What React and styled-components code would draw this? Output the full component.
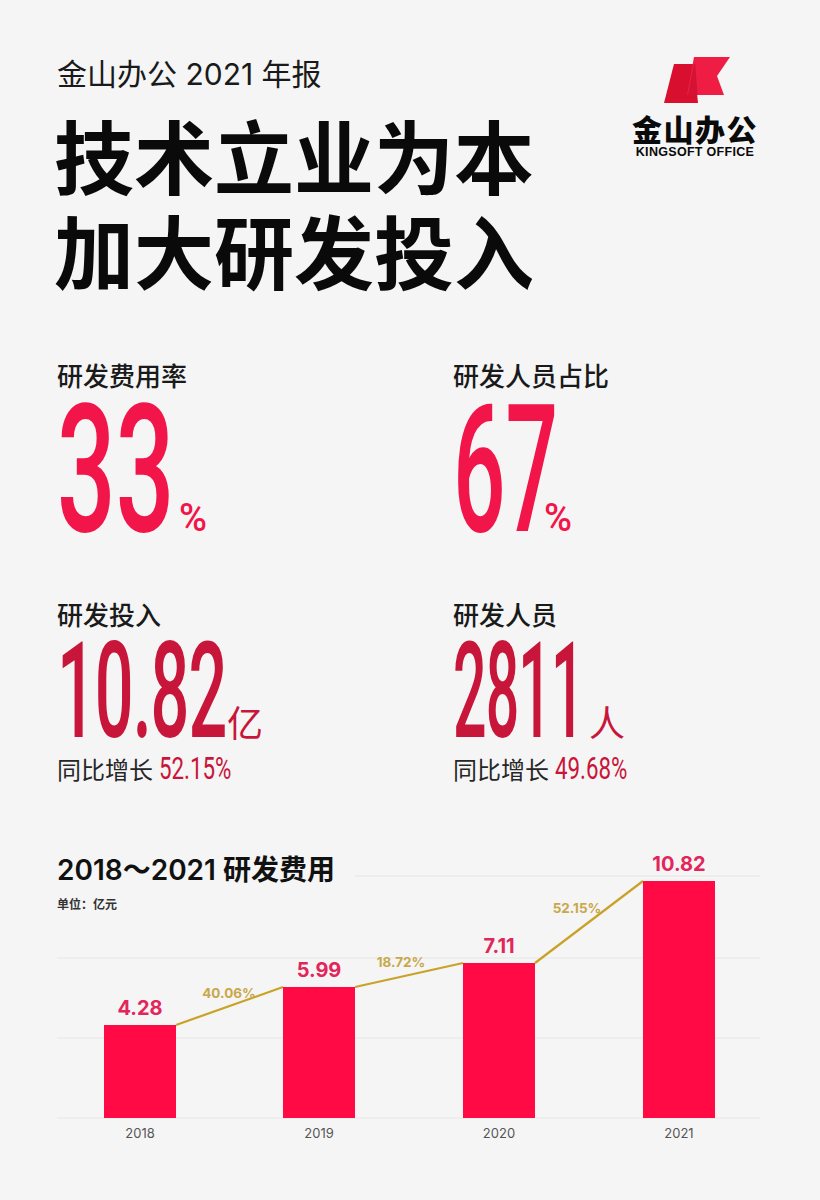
import React from "react";
import styled, { createGlobalStyle } from "styled-components";

const Global = createGlobalStyle`
  html, body {
    margin: 0;
    padding: 0;
    background: #f5f5f5;
  }
  body {
    font-family: "Noto Sans CJK SC", "Noto Sans", sans-serif;
    color: #111;
  }
`;

const Page = styled.div`
  width: 820px;
  min-height: 1200px;
  box-sizing: border-box;
  padding: 57px 60px 0 57px;
  background: #f5f5f5;
`;

const Header = styled.header`
  display: flex;
  justify-content: space-between;
  align-items: flex-start;
`;

const Kicker = styled.div`
  font-size: 30px;
  line-height: 35px;
  font-family: "Inter", "Noto Sans CJK SC", sans-serif;
  color: #1a1a1a;
`;

const Title = styled.h1`
  margin: 14px 0 0 -3px;
  font-size: 80px;
  line-height: 95px;
  font-weight: 700;
  color: #0a0a0a;
`;

const Logo = styled.div`
  display: flex;
  flex-direction: column;
  align-items: center;
  width: 130px;
`;

const LogoCn = styled.div`
  margin-top: 6px;
  font-size: 30px;
  line-height: 30px;
  font-weight: 900;
  letter-spacing: 1.5px;
  color: #0a0a0a;
`;

const LogoEn = styled.div`
  margin-top: 2px;
  font-family: "Liberation Sans", Arial, sans-serif;
  font-size: 12.5px;
  font-weight: 700;
  letter-spacing: 0.3px;
  color: #0a0a0a;
`;

const Stats = styled.section`
  display: grid;
  grid-template-columns: 396px 1fr;
  margin-top: 64px;
  row-gap: 64px;
`;

const Stat = styled.div`
  display: flex;
  flex-direction: column;
`;

const Label = styled.div`
  font-size: 26px;
  line-height: 30px;
  font-weight: 500;
  color: #1a1a1a;
`;

const Figure = styled.div`
  display: flex;
  align-items: baseline;
  margin-top: ${(p) => p.$gap}px;
  line-height: ${(p) => p.$lh}px;
  height: ${(p) => p.$lh}px;
  color: ${(p) => p.$color};
`;

const NumBox = styled.span`
  display: inline-block;
  width: ${(p) => p.$w}px;
  white-space: nowrap;
`;

const Num = styled.span`
  display: inline-block;
  font-family: "Roboto", sans-serif;
  font-weight: 500;
  font-size: ${(p) => p.$size}px;
  letter-spacing: ${(p) => p.$ls || 0}px;
  transform: scaleX(${(p) => p.$sx});
  transform-origin: left bottom;
`;

const Unit = styled.span`
  font-family: ${(p) => (p.$cjk ? '"Noto Sans CJK SC", sans-serif' : '"Roboto", sans-serif')};
  font-size: ${(p) => p.$size}px;
  font-weight: ${(p) => (p.$cjk ? 400 : 500)};
  line-height: 1;
`;

const Growth = styled.div`
  display: flex;
  align-items: baseline;
  margin-top: 12px;
  font-size: 24px;
  line-height: 30px;
  color: #262626;
`;

const GrowthNum = styled.span`
  display: inline-block;
  margin-left: 6px;
  font-family: "Roboto", sans-serif;
  font-size: 31px;
  color: #c8163a;
  transform: scaleX(0.72);
  transform-origin: left bottom;
`;

const ChartSection = styled.section`
  position: relative;
  margin-top: 66px;
  width: 703px;
  height: 300px;
  padding-top: 3px;
  box-sizing: border-box;
`;

const ChartTitle = styled.h2`
  position: relative;
  z-index: 1;
  margin: 0;
  font-family: "Inter", "Noto Sans CJK SC", sans-serif;
  font-size: 28px;
  line-height: 34px;
  font-weight: 600;
  color: #111;
`;

const ChartUnit = styled.div`
  position: relative;
  z-index: 1;
  margin-top: 10px;
  font-size: 12px;
  line-height: 14px;
  font-weight: 700;
  color: #333;
`;

const Canvas = styled.svg`
  position: absolute;
  left: 0;
  top: 0;
`;

const bars = [
  { year: "2018", value: "4.28", x: 47, top: 175 },
  { year: "2019", value: "5.99", x: 226, top: 137 },
  { year: "2020", value: "7.11", x: 406, top: 113 },
  { year: "2021", value: "10.82", x: 586, top: 31 },
];

const growth = [
  { text: "40.06%", x: 172, y: 148 },
  { text: "18.72%", x: 344, y: 117 },
  { text: "52.15%", x: 520, y: 63 },
];

function KingsoftMark() {
  return (
    <svg width="72" height="50" viewBox="0 0 72 50" style={{ marginLeft: 6 }}>
      <polygon points="12,7 32,7 36,46 2,46" fill="#d80f2e" />
      <polygon points="32,0 68,0 55,19 62,38 25,38" fill="#ef1d44" />
      <polygon points="32,7 33.2,7 35.6,38 26,38" fill="#b80823" opacity="0.5" />
    </svg>
  );
}

function Chart() {
  const bottom = 268;
  return (
    <Canvas width="703" height="300" viewBox="0 0 703 300">
      <line x1="298" y1="26" x2="703" y2="26" stroke="#e6e6e6" strokeWidth="1" />
      {[108, 188, 268].map((y) => (
        <line key={y} x1="0" y1={y} x2="703" y2={y} stroke="#e6e6e6" strokeWidth="1" />
      ))}
      {bars.slice(0, -1).map((b, i) => {
        const n = bars[i + 1];
        return (
          <line
            key={b.year}
            x1={b.x + 72}
            y1={b.top}
            x2={n.x}
            y2={n.top}
            stroke="#c9a227"
            strokeWidth="2.2"
          />
        );
      })}
      {bars.map((b) => (
        <g key={b.year}>
          <rect x={b.x} y={b.top} width="72" height={bottom - b.top} fill="#ff0a45" />
          <text
            x={b.x + 36}
            y={b.top - 10}
            textAnchor="middle"
            fontFamily="Inter, sans-serif"
            fontWeight="700"
            fontSize="20"
            fill="#e2255a"
          >
            {b.value}
          </text>
          <text
            x={b.x + 36}
            y="288"
            textAnchor="middle"
            fontFamily="Inter, sans-serif"
            fontSize="13"
            fill="#555"
          >
            {b.year}
          </text>
        </g>
      ))}
      {growth.map((g) => (
        <text
          key={g.text}
          x={g.x}
          y={g.y}
          textAnchor="middle"
          fontFamily="Inter, sans-serif"
          fontWeight="700"
          fontSize="13.5"
          fill="#c8a84a"
        >
          {g.text}
        </text>
      ))}
    </Canvas>
  );
}

export default function App() {
  return (
    <>
      <Global />
      <Page>
        <Header>
          <div>
            <Kicker>金山办公 2021 年报</Kicker>
            <Title>
              技术立业为本
              <br />
              加大研发投入
            </Title>
          </div>
          <Logo>
            <KingsoftMark />
            <LogoCn>金山办公</LogoCn>
            <LogoEn>KINGSOFT OFFICE</LogoEn>
          </Logo>
        </Header>

        <Stats>
          <Stat>
            <Label>研发费用率</Label>
            <Figure $gap={15} $lh={130} $color="#f2154a">
              <NumBox $w={122}>
                <Num $size={178} $sx={0.58}>33</Num>
              </NumBox>
              <Unit $size={38}>%</Unit>
            </Figure>
          </Stat>
          <Stat>
            <Label>研发人员占比</Label>
            <Figure $gap={15} $lh={130} $color="#f2154a">
              <NumBox $w={91}>
                <Num $size={178} $sx={0.52}>67</Num>
              </NumBox>
              <Unit $size={38}>%</Unit>
            </Figure>
          </Stat>
          <Stat>
            <Label>研发投入</Label>
            <Figure $gap={13} $lh={100} $color="#c8163a">
              <NumBox $w={170}>
                <Num $size={134} $sx={0.51} $ls={-2}>10.82</Num>
              </NumBox>
              <Unit $cjk $size={36}>亿</Unit>
            </Figure>
            <Growth>
              同比增长<GrowthNum>52.15%</GrowthNum>
            </Growth>
          </Stat>
          <Stat>
            <Label>研发人员</Label>
            <Figure $gap={13} $lh={100} $color="#c8163a">
              <NumBox $w={136}>
                <Num $size={134} $sx={0.44} $ls={-2}>2811</Num>
              </NumBox>
              <Unit $cjk $size={36}>人</Unit>
            </Figure>
            <Growth>
              同比增长<GrowthNum>49.68%</GrowthNum>
            </Growth>
          </Stat>
        </Stats>

        <ChartSection>
          <ChartTitle>2018～2021 研发费用</ChartTitle>
          <ChartUnit>单位：亿元</ChartUnit>
          <Chart />
        </ChartSection>
      </Page>
    </>
  );
}
